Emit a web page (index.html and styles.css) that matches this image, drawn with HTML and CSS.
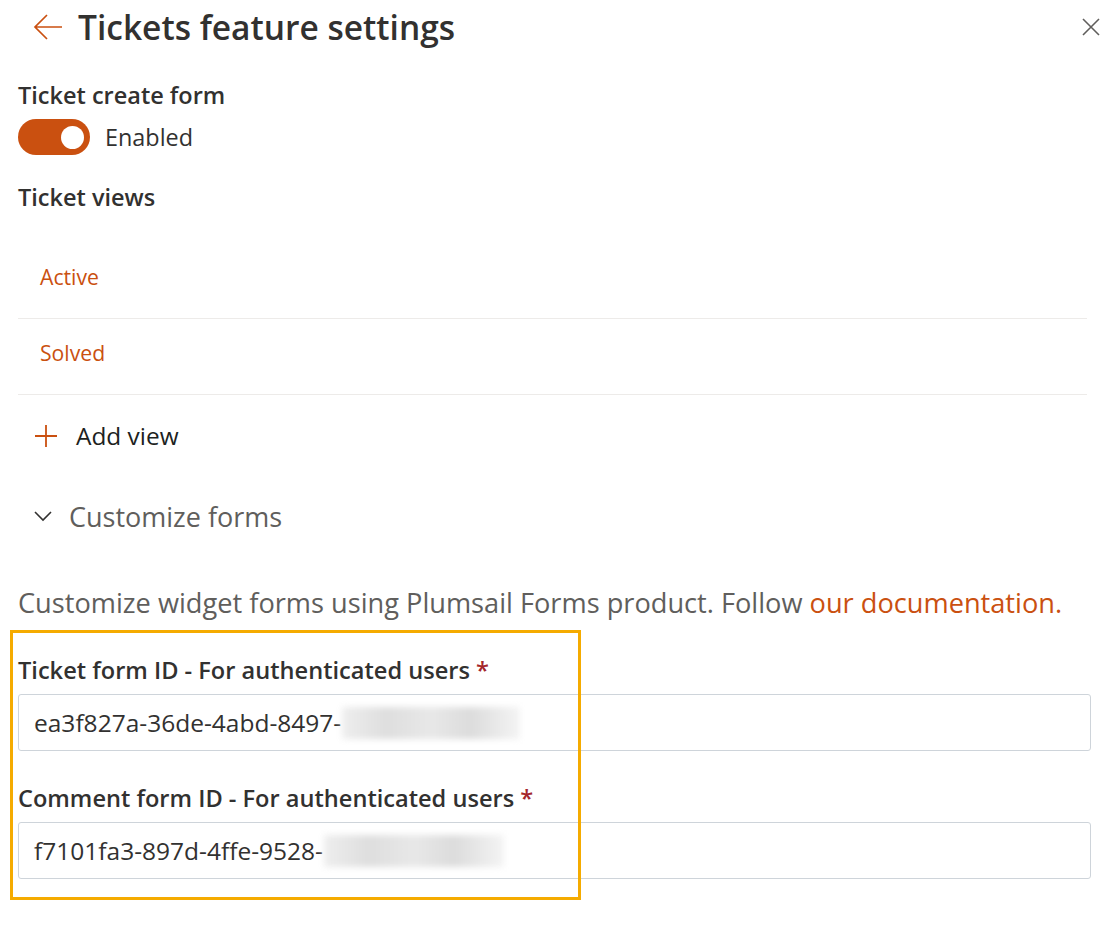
FILE: index.html
```html
<!DOCTYPE html>
<html lang="en">
<head>
    <meta charset="UTF-8">
    <meta name="viewport" content="width=device-width, initial-scale=1.0">
    <title>Tickets feature settings</title>
    <link rel="stylesheet" href="styles.css">
</head>
<body>
    <div class="panel">
        <div class="panel-header">
            <button class="back-btn" aria-label="Back">
                <svg width="30" height="26" viewBox="0 0 30 26"><path d="M14 1 L2 13 L14 25 M2 13 H29" fill="none" stroke="#ca5010" stroke-width="1.7"/></svg>
            </button>
            <h1 class="panel-title">Tickets feature settings</h1>
            <button class="close-btn" aria-label="Close">
                <svg width="18" height="18" viewBox="0 0 18 18"><path d="M1 1 L17 17 M17 1 L1 17" fill="none" stroke="#605e5c" stroke-width="1.6"/></svg>
            </button>
        </div>

        <div class="section-label">Ticket create form</div>
        <div class="toggle-row">
            <span class="toggle on"><span class="toggle-knob"></span></span>
            <span class="toggle-text">Enabled</span>
        </div>

        <div class="section-label views-label">Ticket views</div>
        <ul class="view-list">
            <li class="view-item">Active</li>
            <li class="view-item">Solved</li>
        </ul>

        <button class="add-view">
            <svg width="24" height="24" viewBox="0 0 24 24"><path d="M12 1 V23 M1 12 H23" fill="none" stroke="#ca5010" stroke-width="1.8"/></svg>
            <span>Add view</span>
        </button>

        <button class="collapse-toggle">
            <svg width="18" height="12" viewBox="0 0 18 12"><path d="M1 2 L9 10 L17 2" fill="none" stroke="#323130" stroke-width="1.6"/></svg>
            <span>Customize forms</span>
        </button>

        <p class="forms-note">Customize widget forms using Plumsail Forms product. Follow <a href="#" class="doc-link">our documentation.</a></p>

        <div class="forms-fields">
            <div class="field">
                <label class="field-label">Ticket form ID - For authenticated users <span class="required">*</span></label>
                <div class="text-input">ea3f827a-36de-4abd-8497-<span class="blurred blur-a"></span></div>
            </div>
            <div class="field">
                <label class="field-label">Comment form ID - For authenticated users <span class="required">*</span></label>
                <div class="text-input">f7101fa3-897d-4ffe-9528-<span class="blurred blur-b"></span></div>
            </div>
            <!-- highlight frame from the screenshot -->
            <div class="highlight-frame"></div>
        </div>
    </div>
</body>
</html>
```

FILE: styles.css
```css
body {
    margin: 0;
    font-family: "Open Sans", "Noto Sans", sans-serif;
    color: #323130;
    background-color: #fff;
}

button {
    font-family: inherit;
    background: none;
    border: none;
    padding: 0;
    cursor: pointer;
}

.panel {
    padding: 0 9px 0 18px;
}

.panel-header {
    display: flex;
    align-items: center;
    height: 54px;
}

.back-btn {
    display: flex;
    margin-left: 15px;
    margin-right: 15px;
}

.panel-title {
    flex: 1;
    margin: 0;
    font-size: 33.5px;
    font-weight: 600;
    color: #323130;
}

.close-btn {
    display: flex;
    margin-right: -9px;
    align-self: flex-start;
    margin-top: 18px;
}

.section-label {
    font-size: 23.5px;
    font-weight: 600;
    line-height: 30px;
    margin-top: 26px;
}

.views-label {
    margin-top: 27px;
}

.toggle-row {
    display: flex;
    align-items: center;
    margin-top: 9px;
}

.toggle {
    width: 72px;
    height: 36px;
    border-radius: 18px;
    background-color: #ca5010;
    display: flex;
    align-items: center;
    justify-content: flex-end;
    box-sizing: border-box;
    padding-right: 6px;
}

.toggle-knob {
    width: 23px;
    height: 23px;
    border-radius: 50%;
    background-color: #fff;
}

.toggle-text {
    font-size: 23.4px;
    margin-left: 15px;
}

.view-list {
    list-style: none;
    margin: 31px 4px 0 0;
    padding: 0;
}

.view-item {
    height: 75px;
    line-height: 68px;
    padding-left: 22px;
    font-size: 21.2px;
    color: #ca5010;
    border-bottom: 1px solid #edebe9;
}

.add-view {
    display: flex;
    align-items: center;
    height: 81px;
    margin-left: 16px;
    font-size: 24.4px;
    color: #201f1e;
}

.add-view span {
    margin-left: 18px;
}

.collapse-toggle {
    display: flex;
    align-items: center;
    height: 80px;
    margin-left: 16px;
    font-size: 27px;
    color: #605e5c;
}

.collapse-toggle span {
    margin-left: 17px;
}

.forms-note {
    margin: 27px 0 0 0;
    font-size: 27.2px;
    line-height: 40px;
    color: #605e5c;
}

.doc-link {
    color: #ca5010;
    text-decoration: none;
}

.forms-fields {
    position: relative;
    padding-top: 31px;
    padding-bottom: 20px;
}

.field {
    margin-bottom: 31px;
}

.field-label {
    display: block;
    font-size: 23.6px;
    font-weight: 600;
    line-height: 32px;
    margin-bottom: 8px;
}

.required {
    color: #a4262c;
}

.text-input {
    height: 57px;
    box-sizing: border-box;
    border: 1px solid #ced4da;
    border-radius: 3px;
    display: flex;
    align-items: center;
    padding-left: 15px;
    font-size: 24.5px;
    color: #323130;
}

.blurred {
    display: inline-block;
    height: 32px;
    margin-left: 1px;
    background: linear-gradient(90deg, #eeeeee, #dedede 25%, #e8e8e8 50%, #dcdcdc 72%, #f4f4f4);
    filter: blur(3px);
}

.blur-a {
    width: 178px;
}

.blur-b {
    width: 180px;
}

.highlight-frame {
    position: absolute;
    left: -8px;
    top: 7px;
    width: 565px;
    height: 264px;
    border: 3px solid #f5ab00;
    pointer-events: none;
}
```
